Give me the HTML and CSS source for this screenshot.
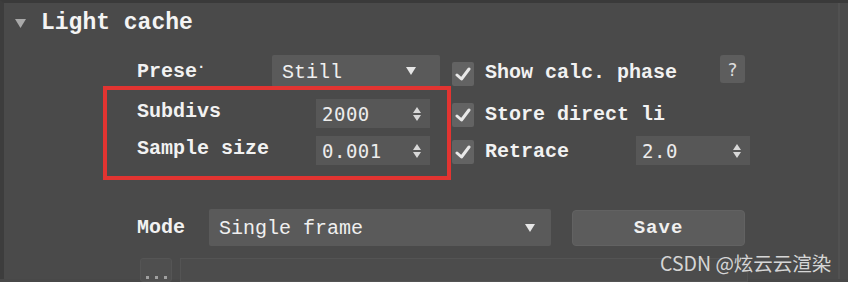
FILE: index.html
```html
<!DOCTYPE html>
<html>
<head>
<meta charset="utf-8">
<link rel="stylesheet" href="styles.css">
</head>
<body>
<div class="panel">
  <div class="header">
    <svg class="caret" width="11" height="9" viewBox="0 0 11 9"><path d="M0 0H11L5.5 9Z" fill="#a9a9a9"/></svg>
    <span class="title">Light cache</span>
  </div>

  <div class="row r1">
    <span class="label w135">Prese<span class="dot">·</span></span>
    <div class="combo still"><span>Still</span><svg class="dd" width="10" height="8" viewBox="0 0 10 8"><path d="M0 0H10L5 8Z" fill="#e6e6e6"/></svg></div>
    <div class="check c1"><svg width="16" height="14" viewBox="0 0 16 14"><path d="M2 8L6.5 12L14 2" fill="none" stroke="#e8e8e8" stroke-width="3" stroke-linecap="round" stroke-linejoin="round"/></svg></div>
    <span class="label opt w235">Show calc. phase</span>
    <div class="help">?</div>
  </div>

  <div class="row r2">
    <span class="label w179 lift">Subdivs</span>
    <div class="spin"><span class="num">2000</span><svg width="10" height="16" viewBox="0 0 10 16"><path d="M1 7H9L5 1Z M1 9H9L5 15Z" fill="#d8d8d8"/></svg></div>
    <div class="check c2"><svg width="16" height="14" viewBox="0 0 16 14"><path d="M2 8L6.5 12L14 2" fill="none" stroke="#e8e8e8" stroke-width="3" stroke-linecap="round" stroke-linejoin="round"/></svg></div>
    <span class="label opt">Store direct li</span>
  </div>

  <div class="row r3">
    <span class="label w179 lift">Sample size</span>
    <div class="spin"><span class="num">0.001</span><svg width="10" height="16" viewBox="0 0 10 16"><path d="M1 7H9L5 1Z M1 9H9L5 15Z" fill="#d8d8d8"/></svg></div>
    <div class="check c2"><svg width="16" height="14" viewBox="0 0 16 14"><path d="M2 8L6.5 12L14 2" fill="none" stroke="#e8e8e8" stroke-width="3" stroke-linecap="round" stroke-linejoin="round"/></svg></div>
    <span class="label opt w151">Retrace</span>
    <div class="spin"><span class="num">2.0</span><svg width="10" height="16" viewBox="0 0 10 16"><path d="M1 7H9L5 1Z M1 9H9L5 15Z" fill="#d8d8d8"/></svg></div>
  </div>

  <div class="row r4">
    <span class="label w72">Mode</span>
    <div class="combo mode"><span>Single frame</span><svg class="dd" width="10" height="8" viewBox="0 0 10 8"><path d="M0 0H10L5 8Z" fill="#e6e6e6"/></svg></div>
    <div class="btn">Save</div>
  </div>

  <div class="row r5">
    <div class="small"><i></i><i></i><i></i></div>
    <div class="field"></div>
  </div>

  <div class="redbox"></div>
  <div class="watermark">CSDN @炫云云渲染</div>
</div>
</body>
</html>
```

FILE: styles.css
```css
html, body {
  margin: 0;
  padding: 0;
  background: #484848;
}
body {
  width: 848px;
  height: 282px;
  overflow: hidden;
  font-family: "Liberation Mono", "DejaVu Sans Mono", monospace;
  color: #f2f2f2;
}
.panel {
  position: relative;
  height: 279px;
  border-top: 3px solid #3a3a3a;
  border-left: 4px solid #3d3d3d;
  box-sizing: border-box;
  background: #4a4a4a;
}
.panel::after {
  content: "";
  position: absolute;
  right: 8px;
  top: 0;
  bottom: 0;
  width: 2px;
  background: #515151;
}
.header {
  display: flex;
  align-items: center;
  height: 40px;
  padding-left: 11px;
}
.caret {
  margin-right: 15px;
  margin-top: 1px;
}
.title {
  font-size: 23px;
  font-weight: bold;
  color: #f4f4f4;
}
.row {
  display: flex;
  align-items: center;
  padding-left: 133px;
}
.label {
  font-size: 20px;
  font-weight: bold;
  white-space: nowrap;
  flex: none;
}
.dot { font-size: 14px; vertical-align: 6px; }
.w135 { width: 135px; }
.w179 { width: 179px; }
.w235 { width: 235px; }
.w151 { width: 151px; }
.w72 { width: 72px; }
.r1 { margin-top: 12px; height: 32px; }
.r2 { margin-top: 12px; height: 29px; }
.r3 { margin-top: 8px; height: 29px; }
.r4 { margin-top: 44px; height: 37px; }
.r5 { margin-top: 12px; height: 24px; padding-left: 136px; align-items: stretch; }
.lift { margin-top: -4px; }

.combo {
  display: flex;
  align-items: center;
  justify-content: space-between;
  box-sizing: border-box;
  height: 100%;
  background: #5a5a5a;
  border-radius: 2px;
  font-size: 20px;
  padding: 0 24px 0 10px;
  color: #f0f0f0;
  flex: none;
}
.combo span { margin-top: 2px; }
.still { width: 168px; }
.mode { width: 342px; height: 37px; padding-right: 16px; }
.check {
  width: 22px;
  height: 24px;
  background: #636363;
  border-radius: 2px;
  display: flex;
  align-items: center;
  justify-content: center;
  flex: none;
  margin-right: 11px;
}
.c1 { margin-left: 12px; margin-top: 6px; }
.c2 { margin-left: 22px; margin-top: 2px; }
.opt { margin-top: 2px; }
.help {
  width: 25px;
  height: 28px;
  background: #5d5d5d;
  border-radius: 3px;
  font-family: "DejaVu Sans", sans-serif;
  font-size: 18px;
  color: #dcdcdc;
  display: flex;
  align-items: center;
  justify-content: center;
  margin-top: -4px;
}
.spin {
  width: 114px;
  height: 29px;
  box-sizing: border-box;
  background: #575757;
  display: flex;
  align-items: center;
  justify-content: space-between;
  padding: 0 8px 0 6px;
  flex: none;
}
.num {
  font-family: "DejaVu Sans Mono", monospace;
  font-size: 19px;
  letter-spacing: 0.5px;
  color: #ececec;
}
.btn {
  width: 173px;
  height: 36px;
  box-sizing: border-box;
  margin-left: 21px;
  background: #5c5c5c;
  border: 1px solid #626262;
  border-radius: 4px;
  display: flex;
  align-items: center;
  justify-content: center;
  font-size: 19px;
  font-weight: bold;
  letter-spacing: 1px;
  color: #f0f0f0;
}
.small {
  width: 32px;
  box-sizing: border-box;
  background: #4f4f4f;
  border: 1px solid #555;
  border-radius: 3px;
  display: flex;
  align-items: flex-end;
  justify-content: center;
  gap: 6px;
  padding-bottom: 2px;
}
.small i {
  width: 3px;
  height: 3px;
  background: #a0a0a0;
}
.field {
  width: 568px;
  margin-left: 8px;
  box-sizing: border-box;
  background: #4c4c4c;
  border: 1px solid #545454;
}
.redbox {
  position: absolute;
  left: 99px;
  top: 83px;
  width: 348px;
  height: 94px;
  box-sizing: border-box;
  border: 4px solid #e23431;
}
.watermark {
  position: absolute;
  left: 656px;
  top: 245px;
  font-family: "Noto Sans CJK SC", "Noto Sans", sans-serif;
  font-size: 19.5px;
  color: rgba(240, 240, 240, 0.85);
  white-space: nowrap;
}
```
